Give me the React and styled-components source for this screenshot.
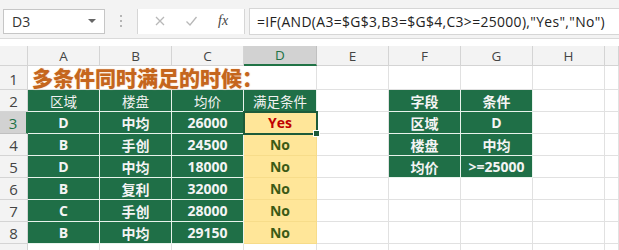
import React from 'react'
import styled, { createGlobalStyle, css } from 'styled-components'

const Global = createGlobalStyle`
  body {
    margin: 0;
    background: #fff;
    font-family: "Open Sans", "Noto Sans CJK SC", sans-serif;
  }
`

const Page = styled.div`
  width: 619px;
  height: 250px;
  overflow: hidden;
  background: #fff;
`

const FormulaBar = styled.div`
  height: 38px;
  background: #f3f3f3;
  border-bottom: 1px solid #dadada;
  display: flex;
  align-items: center;
  padding: 0 0 0 3px;
`

const NameBox = styled.div`
  width: 102px;
  height: 25px;
  margin-top: 4px;
  background: #fff;
  border: 1px solid #c6c6c6;
  display: flex;
  align-items: center;
  justify-content: space-between;
  padding: 0 8px 0 8px;
  box-sizing: border-box;
  font-size: 14px;
  color: #333;
`

const Caret = styled.span`
  width: 0;
  height: 0;
  border-left: 4px solid transparent;
  border-right: 4px solid transparent;
  border-top: 4px solid #666;
`

const Dots = styled.div`
  width: 32px;
  display: flex;
  flex-direction: column;
  align-items: center;
  gap: 3px;
  margin-top: 4px;
  span {
    width: 2px;
    height: 2px;
    background: #b5b5b5;
  }
`

const Buttons = styled.div`
  width: 108px;
  height: 25px;
  margin-top: 4px;
  background: #fff;
  border-left: 1px solid #d6d6d6;
  border-right: 1px solid #d6d6d6;
  display: flex;
  align-items: center;
  justify-content: space-around;
  padding: 0 6px;
  box-sizing: border-box;
`

const Fx = styled.span`
  font-family: "Liberation Serif", serif;
  font-style: italic;
  font-size: 14px;
  color: #444;
`

const FormulaInput = styled.div`
  flex: 1;
  height: 25px;
  margin-top: 4px;
  margin-left: 4px;
  background: #fff;
  border: 1px solid #d6d6d6;
  border-right: none;
  display: flex;
  align-items: center;
  padding-left: 7px;
  font-size: 13.9px;
  letter-spacing: 0.35px;
  color: #222;
  white-space: nowrap;
`

const Sheet = styled.div`
  margin-top: 7px;
  display: grid;
  grid-template-columns: 28px 72px 72px 72px 73px 72px 72px 72px 72px 1fr;
  grid-template-rows: 20px 24px repeat(8, 22px);
`

const cellKinds = {
  plain: css`
    background: #fff;
    border-right: 1px solid #e1e1e1;
    border-bottom: 1px solid #e1e1e1;
  `,
  colHead: css`
    background: #f3f3f3;
    color: #444;
    font-size: 13.5px;
    border-right: 1px solid #d4d4d4;
    border-bottom: 1px solid #d4d4d4;
  `,
  colHeadOn: css`
    background: #d2d2d2;
    color: #217346;
    font-size: 13.5px;
    border-right: 1px solid #c0c0c0;
    border-bottom: 2px solid #217346;
  `,
  rowHead: css`
    background: #f3f3f3;
    color: #444;
    font-size: 15px;
    border-right: 1px solid #d4d4d4;
    border-bottom: 1px solid #d4d4d4;
    align-items: flex-end;
  `,
  rowHeadOn: css`
    background: #d2d2d2;
    color: #217346;
    font-size: 15px;
    border-right: 2px solid #217346;
    border-bottom: 1px solid #c0c0c0;
    align-items: flex-end;
  `,
  greenHead: css`
    background: #1f6f47;
    color: #f2f2f2;
    font-size: 13.5px;
    border-right: 1px solid #e8f3ec;
    border-bottom: 1px solid #e8f3ec;
  `,
  green: css`
    background: #1f6f47;
    color: #f4f4f4;
    font-size: 14px;
    font-weight: bold;
    border-right: 1px solid #e8f3ec;
    border-bottom: 1px solid #e8f3ec;
  `,
  yellow: css`
    background: #ffe699;
    color: #3b5a16;
    font-size: 14px;
    font-weight: bold;
    border-right: 1px solid #f7dc8a;
    border-bottom: 1px solid #f7dc8a;
  `,
}

const Cell = styled.div`
  position: relative;
  box-sizing: border-box;
  display: flex;
  align-items: center;
  justify-content: center;
  overflow: visible;
  white-space: nowrap;
  ${p => cellKinds[p.$kind || 'plain']}
  ${p => p.$red && css`color: #c00000;`}
  ${p => p.$open && css`border-right: none;`}
  ${p => p.$selected && css`
    outline: 2px solid #1d5b3a;
    outline-offset: -1px;
    z-index: 2;
  `}
`

const Handle = styled.span`
  position: absolute;
  right: -4px;
  bottom: -4px;
  width: 5px;
  height: 5px;
  background: #1d5b3a;
  border: 1px solid #fff;
`

const Title = styled.div`
  position: absolute;
  left: 4px;
  top: 0;
  height: 23px;
  line-height: 23px;
  font-family: "Noto Sans CJK SC", sans-serif;
  font-weight: 900;
  font-size: 21px;
  color: #c5661d;
  text-shadow: 0 0 2px #f6d9b6;
  z-index: 1;
`

const cols = ['A', 'B', 'C', 'D', 'E', 'F', 'G', 'H']

const left = [
  ['区域', '楼盘', '均价', '满足条件'],
  ['D', '中均', '26000', 'Yes'],
  ['B', '手创', '24500', 'No'],
  ['D', '中均', '18000', 'No'],
  ['B', '复利', '32000', 'No'],
  ['C', '手创', '28000', 'No'],
  ['B', '中均', '29150', 'No'],
]

const right = [
  ['字段', '条件'],
  ['区域', 'D'],
  ['楼盘', '中均'],
  ['均价', '>=25000'],
]

function renderRow(r) {
  // r is the sheet row number, 2..9 (9 is only the sliver at the bottom)
  const cells = []
  cells.push(
    <Cell key="h" $kind={r === 3 ? 'rowHeadOn' : 'rowHead'}>{r < 9 ? r : ''}</Cell>
  )
  const data = left[r - 2]
  for (let c = 0; c < 4; c++) {
    if (!data) {
      cells.push(<Cell key={c} />)
      continue
    }
    let kind = 'green'
    if (r === 2) kind = 'greenHead'
    else if (c === 3) kind = 'yellow'
    const sel = r === 3 && c === 3
    cells.push(
      <Cell key={c} $kind={kind} $red={sel} $selected={sel}>
        {data[c]}
        {sel && <Handle />}
      </Cell>
    )
  }
  cells.push(<Cell key="e" />)
  const rd = right[r - 2]
  for (let c = 0; c < 2; c++) {
    cells.push(
      <Cell key={'r' + c} $kind={rd ? 'green' : 'plain'}>{rd ? rd[c] : ''}</Cell>
    )
  }
  cells.push(<Cell key="h1" />)
  cells.push(<Cell key="h2" />)
  return cells
}

export default function App() {
  return (
    <Page>
      <Global />
      <FormulaBar>
        <NameBox>
          D3
          <Caret />
        </NameBox>
        <Dots><span /><span /><span /></Dots>
        <Buttons>
          <svg width="12" height="12" viewBox="0 0 12 12">
            <path d="M2 2 L10 10 M10 2 L2 10" stroke="#b8b8b8" strokeWidth="1.3" />
          </svg>
          <svg width="13" height="12" viewBox="0 0 13 12">
            <path d="M1.5 6.5 L5 10 L11.5 2" stroke="#b8b8b8" strokeWidth="1.3" fill="none" />
          </svg>
          <Fx>fx</Fx>
        </Buttons>
        <FormulaInput>=IF(AND(A3=$G$3,B3=$G$4,C3&gt;=25000),"Yes","No")</FormulaInput>
      </FormulaBar>
      <Sheet>
        <Cell $kind="colHead" />
        {cols.map(c => (
          <Cell key={c} $kind={c === 'D' ? 'colHeadOn' : 'colHead'}>{c}</Cell>
        ))}
        <Cell $kind="colHead" />

        <Cell $kind="rowHead">1</Cell>
        <Cell $open>
          <Title>多条件同时满足的时候：</Title>
        </Cell>
        <Cell $open />
        <Cell $open />
        <Cell />
        <Cell />
        <Cell />
        <Cell />
        <Cell />
        <Cell />

        {[2, 3, 4, 5, 6, 7, 8, 9].map(r => (
          <React.Fragment key={r}>{renderRow(r)}</React.Fragment>
        ))}
      </Sheet>
    </Page>
  )
}
